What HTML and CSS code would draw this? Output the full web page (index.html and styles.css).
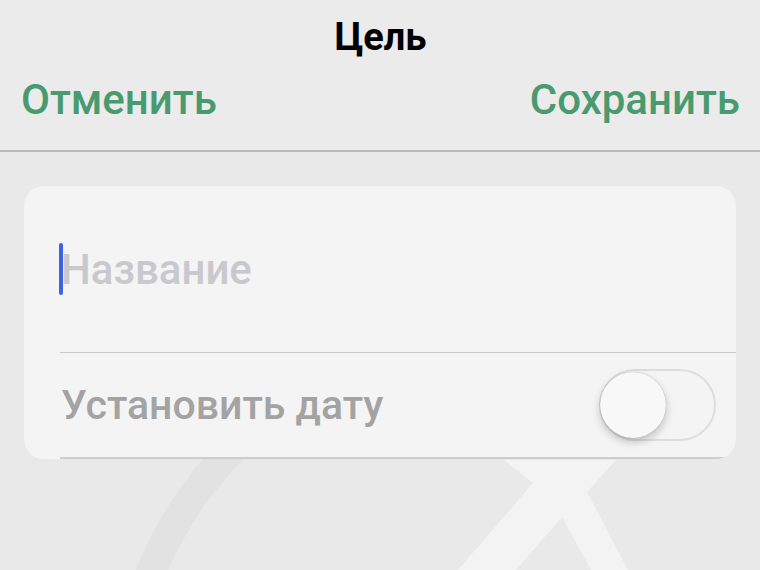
FILE: index.html
```html
<!DOCTYPE html>
<html lang="ru">
<head>
<meta charset="utf-8">
<link rel="stylesheet" href="styles.css">
</head>
<body>
<svg class="watermark" width="760" height="570" viewBox="0 0 760 570">
  <path d="M 240 442 Q 178 500 146 585" fill="none" stroke="#e2e2e2" stroke-width="30"/>
  <polygon points="504,460 533,483 458,570 516,570 562,517 591,570 628,570 587,492 616,460" fill="#f3f3f3"/>
</svg>
<header class="nav">
  <div class="title">Цель</div>
  <div class="actions">
    <span class="btn">Отменить</span>
    <span class="btn">Сохранить</span>
  </div>
</header>
<main class="card">
  <div class="row name-row">
    <span class="cursor"></span><span class="placeholder">Название</span>
  </div>
  <div class="row date-row">
    <span class="label">Установить дату</span>
    <span class="toggle"><span class="knob"></span></span>
  </div>
</main>
</body>
</html>
```
FILE: styles.css
```css
html, body {
  margin: 0;
  padding: 0;
}
body {
  width: 760px;
  height: 570px;
  overflow: hidden;
  position: relative;
  background: #e9e9e9;
  font-family: "Roboto", "Liberation Sans", sans-serif;
}
.watermark {
  position: absolute;
  left: 0;
  top: 0;
  z-index: 0;
}
.nav {
  position: relative;
  z-index: 1;
  height: 150px;
  border-bottom: 2px solid #b9b9b9;
  background: #ebebeb;
  padding: 0 20px 0 21px;
}
.title {
  height: 74px;
  line-height: 74px;
  text-align: center;
  font-size: 38px;
  font-weight: 700;
  color: #000;
}
.actions {
  display: flex;
  justify-content: space-between;
  height: 52px;
  line-height: 52px;
}
.btn {
  font-size: 42px;
  font-weight: 500;
  color: #4a9a6f;
}
.card {
  position: relative;
  z-index: 1;
  margin: 34px 24px 0;
  height: 273px;
  background: #f4f4f4;
  border-radius: 20px;
  overflow: hidden;
}
.row {
  display: flex;
  align-items: center;
  margin-left: 36px;
}
.name-row {
  height: 166px;
  border-bottom: 1px solid #c9c9c9;
}
.cursor {
  width: 4px;
  height: 52px;
  border-radius: 2px;
  background: #3d62e6;
  margin-left: -1px;
}
.placeholder {
  font-size: 42px;
  font-weight: 500;
  color: #c8c8cd;
  margin-left: -2px;
}
.date-row {
  height: 104px;
  justify-content: space-between;
  padding-right: 20px;
  border-bottom: 2px solid #cdcdcd;
}
.label {
  font-size: 41px;
  font-weight: 500;
  color: #a3a3a3;
  margin-left: 1px;
}
.toggle {
  position: relative;
  width: 113px;
  height: 68px;
  border: 2px solid #dedede;
  border-radius: 36px;
  background: #f4f4f4;
  display: flex;
  align-items: center;
}
.knob {
  width: 66px;
  height: 66px;
  border-radius: 50%;
  background: #f8f8f8;
  box-shadow: 0 4px 8px rgba(0, 0, 0, 0.22), 0 0 1px rgba(0, 0, 0, 0.3);
  margin-left: -1px;
}
```
